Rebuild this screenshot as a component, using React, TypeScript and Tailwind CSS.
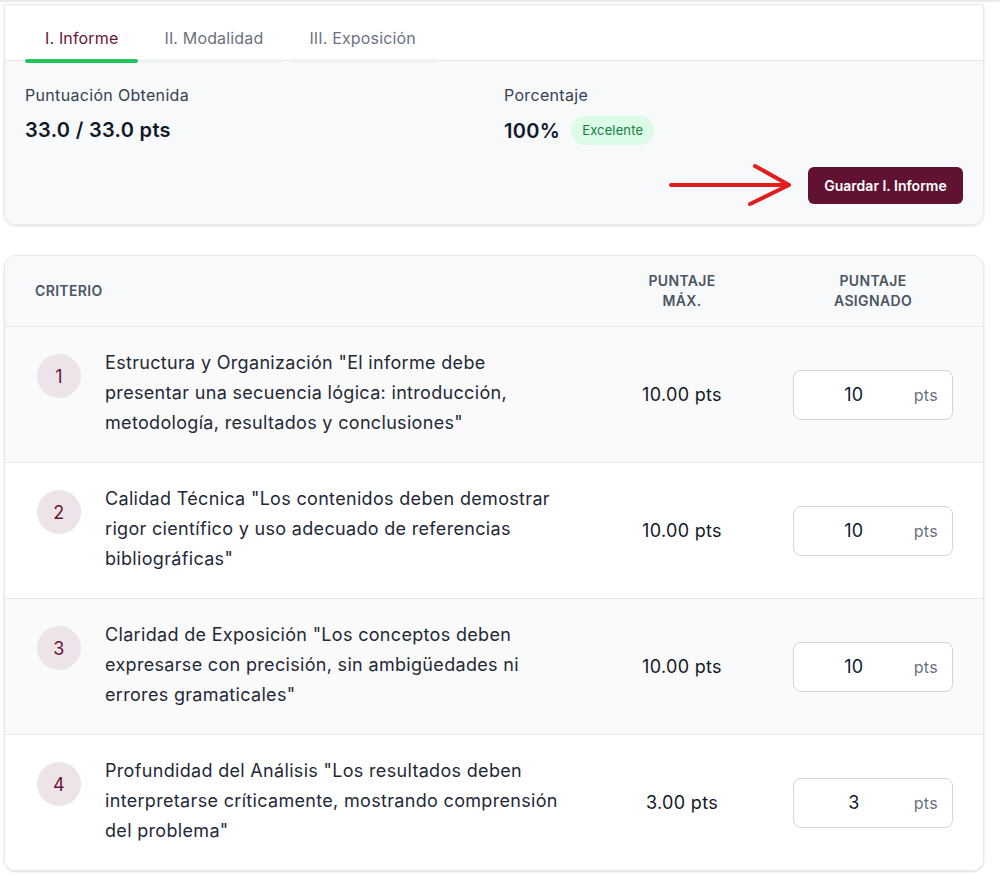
import React from "react";

const rows = [
  {
    n: 1,
    text: 'Estructura y Organización "El informe debe presentar una secuencia lógica: introducción, metodología, resultados y conclusiones"',
    max: "10.00 pts",
    val: "10",
    bg: "bg-[#fafafa]",
  },
  {
    n: 2,
    text: 'Calidad Técnica "Los contenidos deben demostrar rigor científico y uso adecuado de referencias bibliográficas"',
    max: "10.00 pts",
    val: "10",
    bg: "bg-white",
  },
  {
    n: 3,
    text: 'Claridad de Exposición "Los conceptos deben expresarse con precisión, sin ambigüedades ni errores gramaticales"',
    max: "10.00 pts",
    val: "10",
    bg: "bg-[#fafafa]",
  },
  {
    n: 4,
    text: 'Profundidad del Análisis "Los resultados deben interpretarse críticamente, mostrando comprensión del problema"',
    max: "3.00 pts",
    val: "3",
    bg: "bg-white",
  },
];

export default function App() {
  return (
    <div
      className="w-[1000px] min-h-[883px] bg-white tracking-[0.02em]"
      style={{ fontFamily: "Inter, 'Noto Sans', sans-serif" }}
    >
      <div className="h-[2px] bg-[#e9e9e9]" />
      {/* Top card */}
      <div className="ml-[4px] mt-[2px] w-[980px] rounded-b-xl border border-gray-200 shadow-sm overflow-hidden">
        <div className="bg-white h-[56px] border-b border-gray-200 px-5 relative">
          <div className="absolute left-5 right-5 bottom-[-3px] flex gap-[6px] z-10 tracking-[0.01em]">
            <div className="flex flex-col items-stretch">
              <div className="px-5 pb-[9px] text-[16px] leading-6 text-[#6b1438]">I. Informe</div>
              <div className="h-[4px] rounded-full bg-[#22c55e]" />
            </div>
            <div className="flex flex-col items-stretch">
              <div className="px-5 pb-[9px] text-[16px] leading-6 text-[#6b7280]">II. Modalidad</div>
              <div className="h-[4px] rounded-full bg-[#f1f2f4]" />
            </div>
            <div className="flex flex-col items-stretch">
              <div className="px-5 pb-[9px] text-[16px] leading-6 text-[#6b7280]">III. Exposición</div>
              <div className="h-[4px] rounded-full bg-[#f1f2f4]" />
            </div>
          </div>
        </div>
        <div className="bg-[#f8f9fb] px-5 pt-[23px] pb-[17px]">
          <div className="grid grid-cols-2 gap-5">
            <div>
              <div className="text-[16px] leading-[22px] text-[#374151]">Puntuación Obtenida</div>
              <div className="mt-[10px] text-[20px] leading-[28px] font-semibold text-[#111827]">33.0 / 33.0 pts</div>
            </div>
            <div>
              <div className="text-[16px] leading-[22px] text-[#374151]">Porcentaje</div>
              <div className="mt-[10px] flex items-center gap-[11px]">
                <span className="text-[20px] leading-[28px] font-semibold text-[#111827]">100%</span>
                <span className="rounded-full bg-[#dcfce7] px-[11px] h-[29px] flex items-center text-[13px] text-[#15803d] tracking-[0.01em]">Excelente</span>
              </div>
            </div>
          </div>
          <div className="mt-[18px] flex items-center justify-end gap-[14px]">
            <svg width="126" height="44" viewBox="0 0 126 44">
              <path d="M3 22 H120" stroke="#e11d1d" strokeWidth="4" strokeLinecap="round" fill="none" />
              <path d="M87 3 L121 22 L82 41" stroke="#e11d1d" strokeWidth="4" strokeLinecap="round" strokeLinejoin="round" fill="none" />
            </svg>
            <button className="h-[37px] w-[155px] rounded-md bg-[#611233] text-white text-[14px] font-semibold tracking-normal">
              Guardar I. Informe
            </button>
          </div>
        </div>
      </div>

      {/* Table card */}
      <div className="ml-[4px] mt-[30px] w-[980px] rounded-xl border border-gray-200 shadow-sm overflow-hidden">
        <div className="h-[71px] bg-[#f8f9fb] border-b border-gray-200 grid grid-cols-[1fr_140px_160px] gap-x-[41px] items-center px-[30px] text-[14px] leading-5 font-semibold tracking-wide text-[#4b5563] uppercase">
          <div>Criterio</div>
          <div className="text-center">Puntaje<br />Máx.</div>
          <div className="text-center">Puntaje<br />Asignado</div>
        </div>
        {rows.map((r, i) => (
          <div
            key={r.n}
            className={`${r.bg} ${i > 0 ? "border-t border-gray-200" : ""} h-[135px] box-content grid grid-cols-[1fr_140px_160px] gap-x-[41px] items-center px-[30px]`}
          >
            <div className="flex items-start gap-6 self-start pt-[21px] min-w-0">
              <div className="ml-[2px] mt-[6px] h-[44px] w-[44px] shrink-0 rounded-full bg-[#ede4e9] flex items-center justify-center text-[18px] text-[#6b1438]">
                {r.n}
              </div>
              <div className="w-[468px] text-[18px] leading-[30px] text-[#1f2937]">{r.text}</div>
            </div>
            <div className="text-center text-[18px] text-[#111827]">{r.max}</div>
            <div className="h-[50px] w-[160px] rounded-lg border border-gray-300 bg-white flex items-center">
              <div className="flex-1 text-center text-[18px] text-[#111827]">{r.val}</div>
              <div className="pr-[14px] text-[16px] text-[#6b7280]">pts</div>
            </div>
          </div>
        ))}
      </div>
    </div>
  );
}
